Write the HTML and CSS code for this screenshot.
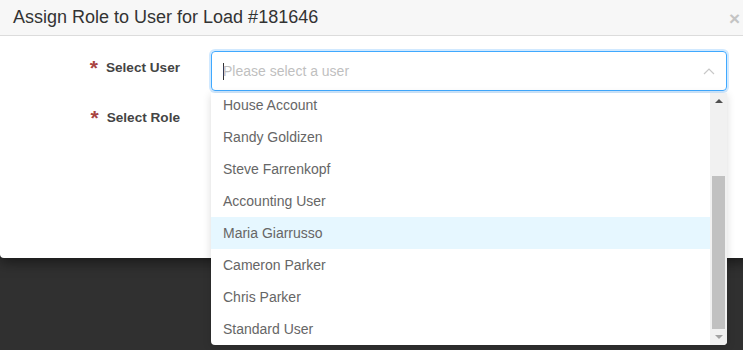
FILE: index.html
```html
<!DOCTYPE html>
<html lang="en">
<head>
  <meta charset="UTF-8">
  <title>Assign Role</title>
  <link rel="stylesheet" href="styles.css">
</head>
<body>

  <div class="modal">
    <div class="modal-header">
      <h4>Assign Role to User for Load #181646</h4>
      <span class="close">&times;</span>
    </div>
    <div class="modal-body">
      <div class="form-row">
        <label class="form-label"><span class="req">*</span>Select User</label>
        <div class="select focused">
          <span class="caret"></span>
          <span class="placeholder">Please select a user</span>
          <svg class="arrow" width="12" height="8" viewBox="0 0 12 8">
            <polyline points="1,7 6,2 11,7" fill="none" stroke="#c8c8c8" stroke-width="1.2"/>
          </svg>
        </div>
      </div>
      <div class="form-row">
        <label class="form-label"><span class="req">*</span>Select Role</label>
      </div>
    </div>
  </div>

  <div class="dropdown">
    <ul class="options">
      <li>House Account</li>
      <li>Randy Goldizen</li>
      <li>Steve Farrenkopf</li>
      <li>Accounting User</li>
      <li class="active">Maria Giarrusso</li>
      <li>Cameron Parker</li>
      <li>Chris Parker</li>
      <li>Standard User</li>
    </ul>
    <div class="scrollbar">
      <span class="sb-up"></span>
      <span class="sb-thumb"></span>
      <span class="sb-down"></span>
    </div>
  </div>

</body>
</html>
```

FILE: styles.css
```css
* {
  margin: 0; padding: 0; box-sizing: border-box;
}

body {
  font-family: 'Liberation Sans', Arial, sans-serif;
  background: #303030;
  height: 350px;
  overflow: hidden;
  position: relative;
}

.modal {
  width: 750px;
  height: 258px;
  background: #fff;
  border-radius: 0 0 4px 4px;
  box-shadow: 0 4px 14px rgba(0, 0, 0, 0.5);
}

.modal-header {
  height: 36px;
  background: #f7f7f7;
  border-bottom: 1px solid #dcdcdc;
  display: flex;
  align-items: center;
  justify-content: space-between;
  padding: 0 10px 0 13px;
}

.modal-header h4 {
  font-size: 18px;
  font-weight: normal;
  color: #333;
  margin-top: -1px;
}

.close {
  font-size: 19px;
  font-weight: bold;
  color: #c4c4c4;
  margin-top: 3px;
}

.modal-body {
  padding-top: 15px;
}

.form-row {
  display: flex;
  height: 50px;
}

.form-label {
  width: 211px;
  display: flex;
  justify-content: flex-end;
  padding: 9px 31px 0 0;
  font-size: 13.6px;
  font-weight: bold;
  color: #444;
}

.req {
  color: #a94442;
  font-size: 21px;
  margin-right: 8px;
  line-height: 16px;
}

.select {
  position: relative;
  width: 516px;
  height: 40px;
  border: 1px solid #40a9ff;
  border-radius: 4px;
  box-shadow: 0 0 0 2px rgba(24, 144, 255, 0.2);
  display: flex;
  align-items: center;
  padding-left: 11px;
}

.caret {
  width: 1px;
  height: 17px;
  background: #333;
  margin-right: -1px;
}

.placeholder {
  font-size: 14px;
  color: #bfbfbf;
}

.arrow {
  position: absolute;
  right: 11px;
  top: 15px;
}

.dropdown {
  position: absolute;
  left: 211px;
  top: 93px;
  width: 516px;
  height: 252px;
  background: #fff;
  border-radius: 0 0 4px 4px;
  box-shadow: 0 2px 8px rgba(0, 0, 0, 0.15);
  overflow: hidden;
}

.options {
  list-style: none;
  margin-top: -4px;
  padding-right: 17px;
}

.options li {
  height: 32px;
  line-height: 32px;
  padding-left: 12px;
  font-size: 14px;
  color: #666;
}

.options li.active {
  background: #e6f7ff;
}

.scrollbar {
  position: absolute;
  top: 0;
  right: 0;
  width: 17px;
  height: 100%;
  background: #f1f1f1;
  display: flex;
  flex-direction: column;
  align-items: center;
}

.sb-up, .sb-down {
  width: 0;
  height: 0;
  border-left: 4px solid transparent;
  border-right: 4px solid transparent;
  margin: 6px 0;
}

.sb-up {
  border-bottom: 4px solid #505050;
}

.sb-down {
  border-top: 4px solid #a3a3a3;
}

.sb-thumb {
  width: 13px;
  margin-top: auto;
  height: 153px;
  background: #c1c1c1;
}
```
